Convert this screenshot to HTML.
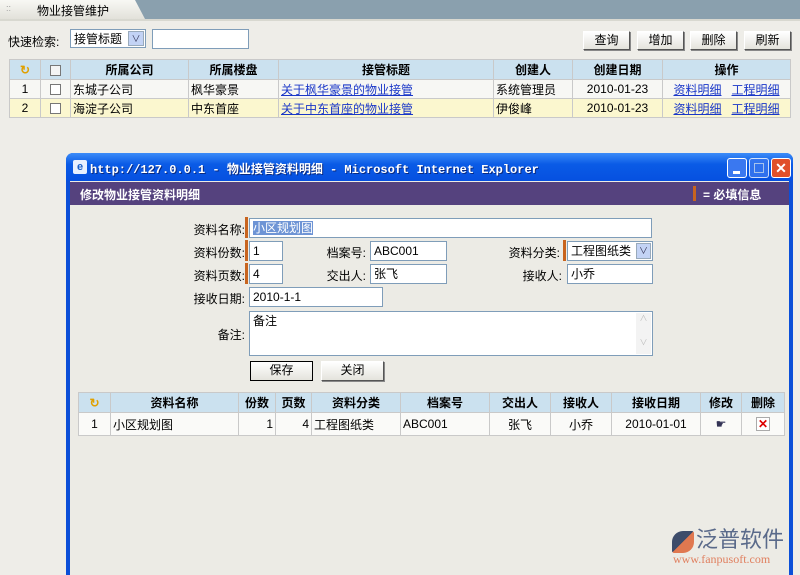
<!DOCTYPE html>
<html style="width:800px;height:575px;overflow:hidden"><head><meta charset="utf-8"><style>
*{box-sizing:border-box;margin:0;padding:0}
html,body{width:800px;height:575px;overflow:hidden}
body{background:#eeede8;font-family:"Liberation Sans","Noto Sans CJK SC",sans-serif;font-size:12px;color:#000;position:relative}
.a{position:absolute}
.inp{position:absolute;background:#fff;border:1px solid #7f9db9;font-size:12px;padding:1px 3px;line-height:16px;white-space:nowrap;overflow:hidden}
.btn{position:absolute;background:linear-gradient(#fff,#e4e3dc);border:1px solid #333;border-color:#fff #555 #555 #fff;box-shadow:1px 1px 0 #888;text-align:center;line-height:17px;font-size:12px}
table{border-collapse:collapse;position:absolute;table-layout:fixed}
td{border:1px solid #c9c9c9;height:19px;padding:0 2px;white-space:nowrap;overflow:hidden;font-size:12px}
th{border:1px solid #c9c9c9;background:#cbe1ef;height:20px;font-weight:bold;font-size:12px}
a{color:#1a37c8;text-decoration:underline}
.lbl{position:absolute;font-size:12px;text-align:right}
.ob{position:absolute;width:3px;background:#c8641e}
.cb{display:inline-block;width:11px;height:11px;border:1px solid #777;background:#fff;vertical-align:middle}
</style></head><body>
<div class="a" style="left:0;top:0;width:800px;height:19px;background:#8aa0ae"></div>
<div class="a" style="left:0;top:0;width:145px;height:19px;background:linear-gradient(#f8f8f4,#e2e1da);clip-path:polygon(0 0,135px 0,145px 19px,0 19px)"></div>
<div class="a" style="left:6px;top:3px;color:#999;font-size:9px">::</div>
<div class="a" style="left:37px;top:2px;font-size:12px">物业接管维护</div>
<div class="a" style="left:0;top:19px;width:800px;height:2px;background:#d8d8d0"></div>

<div class="a" style="left:8px;top:33px">快速检索:</div>
<div class="inp" style="left:70px;top:29px;width:76px;height:19px;border-color:#7f9db9">接管标题</div>
<div class="a" style="left:128px;top:31px;width:16px;height:15px;background:#c3d3f5;border:1px solid #9ab;color:#335;font-size:9px;text-align:center;line-height:14px">∨</div>
<div class="inp" style="left:152px;top:29px;width:97px;height:20px"></div>
<div class="btn" style="left:583px;top:31px;width:47px;height:19px">查询</div>
<div class="btn" style="left:637px;top:31px;width:47px;height:19px">增加</div>
<div class="btn" style="left:690px;top:31px;width:47px;height:19px">删除</div>
<div class="btn" style="left:744px;top:31px;width:47px;height:19px">刷新</div>

<table style="left:9px;top:59px;width:781px">
<colgroup><col style="width:31px"><col style="width:30px"><col style="width:118px"><col style="width:90px"><col style="width:215px"><col style="width:79px"><col style="width:90px"><col style="width:128px"></colgroup>
<tr><th style="color:#e0a000">↻</th><th><span class="cb" style="background:#f4f4f4"></span></th><th>所属公司</th><th>所属楼盘</th><th>接管标题</th><th>创建人</th><th>创建日期</th><th>操作</th></tr>
<tr style="background:#f7f7f4"><td style="text-align:center">1</td><td style="text-align:center"><span class="cb"></span></td><td>东城子公司</td><td>枫华豪景</td><td><a>关于枫华豪景的物业接管</a></td><td>系统管理员</td><td style="text-align:center">2010-01-23</td><td style="text-align:center"><a>资料明细</a>&nbsp;&nbsp;&nbsp;<a>工程明细</a></td></tr>
<tr style="background:#fbf7cf"><td style="text-align:center">2</td><td style="text-align:center"><span class="cb"></span></td><td>海淀子公司</td><td>中东首座</td><td><a>关于中东首座的物业接管</a></td><td>伊俊峰</td><td style="text-align:center">2010-01-23</td><td style="text-align:center"><a>资料明细</a>&nbsp;&nbsp;&nbsp;<a>工程明细</a></td></tr>
</table>

<div class="a" style="left:66px;top:153px;width:727px;height:422px;background:#0b4fd8;border-radius:7px 7px 0 0"></div>
<div class="a" style="left:66px;top:153px;width:727px;height:28px;background:linear-gradient(#3c8cf8,#0a5be6 40%,#0650e0);border-radius:7px 7px 0 0"></div>
<div class="a" style="left:73px;top:160px;width:14px;height:14px;background:#e8f0ff;border-radius:2px;color:#1a60c8;font-size:11px;text-align:center;line-height:14px;font-weight:bold">e</div>
<div class="a" style="left:90px;top:160px;color:#fff;font-family:'Liberation Mono','Noto Sans CJK SC',monospace;font-weight:bold;font-size:12px;text-shadow:1px 1px 0 #0a2a80">http://127.0.0.1 - 物业接管资料明细 - Microsoft Internet Explorer</div>
<div class="a" style="left:727px;top:158px;width:20px;height:20px;background:#3a78f0;border:1px solid #fff;border-radius:3px"><div class="a" style="left:5px;top:12px;width:7px;height:3px;background:#fff"></div></div>
<div class="a" style="left:749px;top:158px;width:20px;height:20px;background:#3a78f0;border:1px solid #fff;border-radius:3px;opacity:.8"><div class="a" style="left:4px;top:4px;width:10px;height:10px;border:1px solid #cde"></div></div>
<div class="a" style="left:771px;top:158px;width:20px;height:20px;background:#e0502a;border:1px solid #fff;border-radius:3px;color:#fff;font-weight:bold;text-align:center;line-height:18px;font-size:14px">✕</div>

<div class="a" style="left:70px;top:181px;width:719px;height:394px;background:#ecebe5"></div>
<div class="a" style="left:70px;top:182px;width:719px;height:23px;background:#55427e"></div>
<div class="a" style="left:80px;top:186px;color:#fff;font-weight:bold;font-size:12px">修改物业接管资料明细</div>
<div class="a" style="left:693px;top:186px;width:3px;height:15px;background:#c8641e"></div>
<div class="a" style="left:703px;top:186px;color:#fff;font-weight:bold;font-size:12px">= 必填信息</div>

<div class="lbl" style="left:170px;top:221px;width:75px">资料名称:</div>
<div class="ob" style="left:245px;top:217px;height:21px"></div>
<div class="inp" style="left:249px;top:218px;width:403px;height:20px"><span style="background:#3168c4;color:#fff;opacity:.7">小区规划图</span></div>

<div class="lbl" style="left:170px;top:244px;width:75px">资料份数:</div>
<div class="ob" style="left:245px;top:240px;height:21px"></div>
<div class="inp" style="left:249px;top:241px;width:34px;height:20px">1</div>
<div class="lbl" style="left:300px;top:244px;width:66px">档案号:</div>
<div class="inp" style="left:370px;top:241px;width:77px;height:20px">ABC001</div>
<div class="lbl" style="left:480px;top:244px;width:80px">资料分类:</div>
<div class="ob" style="left:563px;top:240px;height:21px"></div>
<div class="inp" style="left:567px;top:241px;width:86px;height:20px">工程图纸类</div>
<div class="a" style="left:636px;top:243px;width:15px;height:16px;background:#c3d3f5;border:1px solid #9ab;color:#335;font-size:9px;text-align:center;line-height:15px">∨</div>

<div class="lbl" style="left:170px;top:267px;width:75px">资料页数:</div>
<div class="ob" style="left:245px;top:263px;height:21px"></div>
<div class="inp" style="left:249px;top:264px;width:34px;height:20px">4</div>
<div class="lbl" style="left:300px;top:267px;width:66px">交出人:</div>
<div class="inp" style="left:370px;top:264px;width:77px;height:20px">张飞</div>
<div class="lbl" style="left:480px;top:267px;width:82px">接收人:</div>
<div class="inp" style="left:567px;top:264px;width:86px;height:20px">小乔</div>

<div class="lbl" style="left:170px;top:290px;width:75px">接收日期:</div>
<div class="inp" style="left:249px;top:287px;width:134px;height:20px">2010-1-1</div>

<div class="lbl" style="left:170px;top:326px;width:75px">备注:</div>
<div class="inp" style="left:249px;top:311px;width:404px;height:45px;line-height:16px">备注</div>
<div class="a" style="left:636px;top:313px;width:15px;height:41px;background:#f3f3f3;color:#bbb;font-size:8px;text-align:center;line-height:12px">∧<br><br>∨</div>

<div class="btn" style="left:250px;top:361px;width:63px;height:20px;border:1px solid #000;box-shadow:none">保存</div>
<div class="btn" style="left:321px;top:361px;width:63px;height:20px">关闭</div>

<table style="left:78px;top:392px;width:706px;background:#fafaf8">
<colgroup><col style="width:32px"><col style="width:128px"><col style="width:37px"><col style="width:36px"><col style="width:89px"><col style="width:89px"><col style="width:61px"><col style="width:61px"><col style="width:89px"><col style="width:41px"><col style="width:43px"></colgroup>
<tr><th style="color:#e0a000">↻</th><th>资料名称</th><th>份数</th><th>页数</th><th>资料分类</th><th>档案号</th><th>交出人</th><th>接收人</th><th>接收日期</th><th>修改</th><th>删除</th></tr>
<tr style="height:23px"><td style="text-align:center">1</td><td>小区规划图</td><td style="text-align:right">1</td><td style="text-align:right">4</td><td>工程图纸类</td><td>ABC001</td><td style="text-align:center">张飞</td><td style="text-align:center">小乔</td><td style="text-align:center">2010-01-01</td><td style="text-align:center;color:#335">☛</td><td style="text-align:center"><span style="display:inline-block;width:14px;height:14px;border:1px solid #aaa;background:#fff;color:#d00;font-weight:bold;line-height:12px;font-size:12px">✕</span></td></tr>
</table>

<div class="a" style="left:672px;top:531px;width:22px;height:22px;background:linear-gradient(135deg,#3d4c6a 50%,#e07850 50%);border-radius:50% 10% 50% 10%"></div>
<div class="a" style="left:696px;top:527px;font-size:22px;line-height:26px;color:#5a6a8a">泛普软件</div>
<div class="a" style="left:673px;top:552px;font-size:12px;color:#e08060;font-family:'Liberation Serif',serif">www.fanpusoft.com</div>
</body></html>
